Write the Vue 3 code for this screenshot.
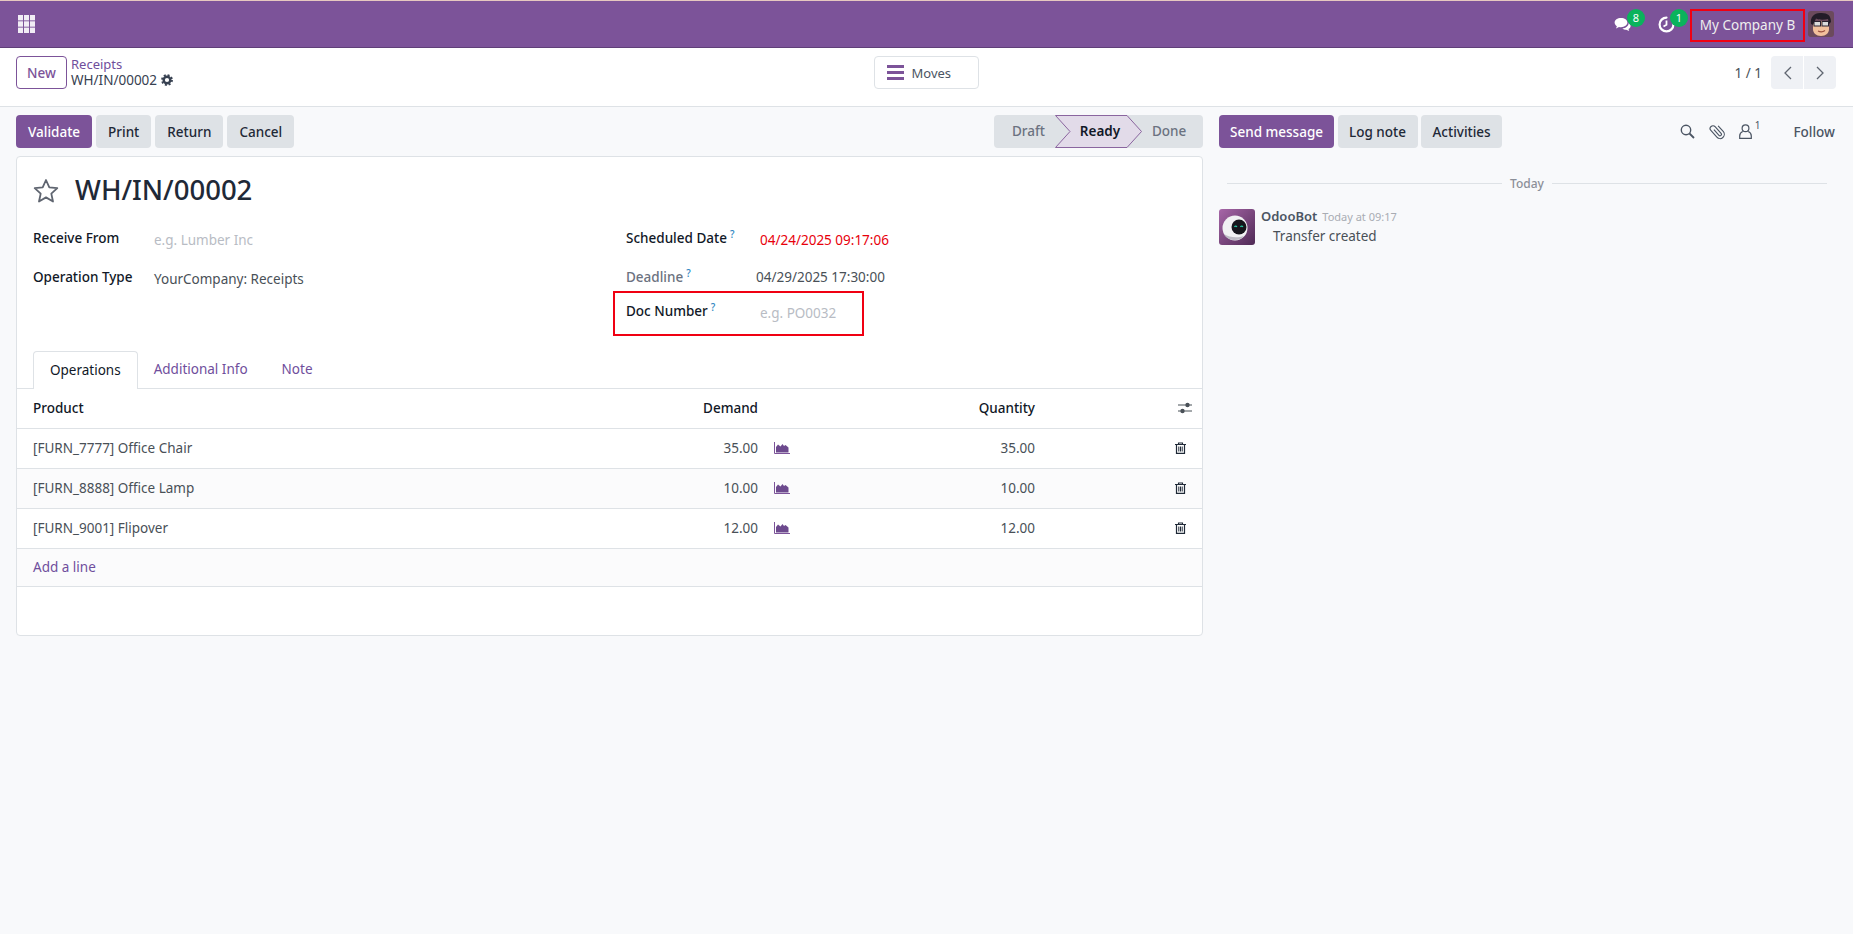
<script setup>
const lines = [
  { name: '[FURN_7777] Office Chair', demand: '35.00', qty: '35.00' },
  { name: '[FURN_8888] Office Lamp', demand: '10.00', qty: '10.00' },
  { name: '[FURN_9001] Flipover', demand: '12.00', qty: '12.00' },
]
</script>

<template>
  <div class="page">
    <header class="navbar">
      <svg class="apps" width="17" height="18" viewBox="0 0 17 18">
        <g fill="#f1edf5">
          <rect x="0" y="0" width="5" height="5.4" /><rect x="6" y="0" width="5" height="5.4" /><rect x="12" y="0" width="5" height="5.4" />
          <rect x="0" y="6.3" width="5" height="5.4" /><rect x="6" y="6.3" width="5" height="5.4" /><rect x="12" y="6.3" width="5" height="5.4" />
          <rect x="0" y="12.6" width="5" height="5.4" /><rect x="6" y="12.6" width="5" height="5.4" /><rect x="12" y="12.6" width="5" height="5.4" />
        </g>
      </svg>
      <div class="nav-right">
        <div class="nav-icon chat">
          <svg width="18" height="15" viewBox="0 0 18 15">
            <path fill="#fff" d="M7 1C3.4 1 .6 3 .6 5.6c0 1.500.9 2.800 2.300 3.600L2 11.400l3-1.400c.6.100 1.300.2 2 .2 3.600 0 6.400-2 6.400-4.600S10.600 1 7 1z" />
            <path fill="#fff" d="M14.600 6.200c0 2.900-2.800 5-6.300 5.200 1 .9 2.400 1.300 3.900 1.300l3 1.300-.7-2.100c1.300-.7 2.100-1.800 2.100-3 0-1.100-.7-2.100-2-2.700z" />
          </svg>
          <span class="badge">8</span>
        </div>
        <div class="nav-icon clock">
          <svg width="17" height="17" viewBox="0 0 17 17">
            <path fill="none" stroke="#fff" stroke-width="2.200" stroke-linecap="round" d="M8.500 1.600a6.900 6.900 0 1 0 6.900 6.900" />
            <path fill="none" stroke="#fff" stroke-width="1.800" d="M8.500 4.500v4.200l-3 1.800" />
          </svg>
          <span class="badge">1</span>
        </div>
        <div class="company">My Company B</div>
        <svg class="avatar-user" width="26" height="26" viewBox="0 0 26 26">
          <rect width="26" height="26" rx="3" fill="#6b4a5c" />
          <path fill="#f2c09c" d="M5 10h16v8c0 4-3 7-8 7s-8-3-8-7z" />
          <path fill="#231c28" d="M3 13C2 6 6 2 12 2c7-.5 11 2 11 9l-2 2-1-5c-4 1-9 1-12-.5L5 14z" />
          <g fill="#dcdcdc" stroke="#2a2230" stroke-width="1">
            <rect x="6" y="10.500" width="6.500" height="4.500" />
            <rect x="14" y="10.500" width="6.500" height="4.500" />
          </g>
          <path fill="none" stroke="#9a4f3e" stroke-width="1.200" d="M10 20c2 1 5 1 7-.5" />
        </svg>
      </div>
    </header>

    <div class="control-panel">
      <div class="cp-left">
        <button class="btn-new">New</button>
        <div class="crumbs">
          <a class="crumb-link">Receipts</a>
          <div class="crumb-current">
            WH/IN/00002
            <svg width="12" height="12" viewBox="0 0 12 12">
              <circle cx="6" cy="6" r="3.300" fill="none" stroke="#374151" stroke-width="2.400" />
              <circle cx="6" cy="6" r="5" fill="none" stroke="#374151" stroke-width="1.800" stroke-dasharray="2 1.930" />
            </svg>
          </div>
        </div>
      </div>
      <button class="btn-moves">
        <svg width="17" height="15" viewBox="0 0 17 15">
          <g fill="#7c5399"><rect width="17" height="3" /><rect y="6" width="17" height="3" /><rect y="12" width="17" height="3" /></g>
        </svg>
        Moves
      </button>
      <div class="pager">
        <span class="pager-text">1 / 1</span>
        <div class="pager-btns">
          <button class="pager-btn">
            <svg width="9" height="14" viewBox="0 0 9 14"><path d="M8 1 2 7l6 6" fill="none" stroke="#5f6570" stroke-width="1.300" /></svg>
          </button>
          <button class="pager-btn">
            <svg width="9" height="14" viewBox="0 0 9 14"><path d="m1 1 6 6-6 6" fill="none" stroke="#5f6570" stroke-width="1.300" /></svg>
          </button>
        </div>
      </div>
    </div>

    <div class="content">
      <main class="form-col">
        <div class="action-row">
          <div class="actions">
            <button class="btn primary">Validate</button>
            <button class="btn">Print</button>
            <button class="btn">Return</button>
            <button class="btn">Cancel</button>
          </div>
          <div class="statusbar">
            <span class="st st-draft">Draft</span>
            <span class="st st-ready">
              <svg class="st-shape" width="87" height="33" viewBox="0 0 87 33">
                <path d="M.5.5H72L86.500 16.500 72 32.500H.5L15 16.500z" fill="#e2dbe9" stroke="#8a659f" />
              </svg>
              <b>Ready</b>
            </span>
            <span class="st st-done">Done</span>
          </div>
        </div>

        <section class="sheet">
          <div class="title-row">
            <svg width="26" height="25" viewBox="0 0 26 25">
              <path d="M13 2l3.300 7.400 8 .8-6 5.400 1.700 7.900-7-4.100-7 4.100 1.700-7.900-6-5.400 8-.8z" fill="none" stroke="#5f6570" stroke-width="1.800" stroke-linejoin="round" />
            </svg>
            <h1>WH/IN/00002</h1>
          </div>

          <div class="fields">
            <div class="field-col">
              <div class="field row-a">
                <label class="lbl">Receive From</label>
                <span class="val placeholder">e.g. Lumber Inc</span>
              </div>
              <div class="field row-b">
                <label class="lbl">Operation Type</label>
                <span class="val">YourCompany: Receipts</span>
              </div>
            </div>
            <div class="field-col right">
              <div class="field row-a">
                <label class="lbl">Scheduled Date<sup>?</sup></label>
                <span class="val late">04/24/2025 09:17:06</span>
              </div>
              <div class="field row-b">
                <label class="lbl muted">Deadline<sup>?</sup></label>
                <span class="val deadline">04/29/2025 17:30:00</span>
              </div>
              <div class="field row-c">
                <label class="lbl">Doc Number<sup>?</sup></label>
                <span class="val placeholder">e.g. PO0032</span>
                <div class="redbox"></div>
              </div>
            </div>
          </div>

          <nav class="tabs">
            <a class="tab active">Operations</a>
            <a class="tab">Additional Info</a>
            <a class="tab">Note</a>
          </nav>

          <div class="table">
            <div class="tr head">
              <span>Product</span>
              <span class="num">Demand</span>
              <span></span>
              <span class="num">Quantity</span>
              <span class="act">
                <svg width="14" height="12" viewBox="0 0 14 12">
                  <g stroke="#495057" stroke-width="1"><path d="M0 3h14M0 9h14" /></g>
                  <circle cx="9.500" cy="3" r="2.200" fill="#495057" /><circle cx="4.500" cy="9" r="2.200" fill="#495057" />
                </svg>
              </span>
            </div>
            <div v-for="line in lines" :key="line.name" class="tr">
              <span>{{ line.name }}</span>
              <span class="num">{{ line.demand }}</span>
              <span class="chart">
                <svg width="16" height="12" viewBox="0 0 16 12">
                  <path d="M.5 0v11.500H16" fill="none" stroke="#7c5399" />
                  <path d="M2 10.500V5l2-2.500 2.500 2 2-2.500L10 4l1.500-1 3 2.500v5z" fill="#6d4a8e" />
                </svg>
              </span>
              <span class="num">{{ line.qty }}</span>
              <span class="act">
                <svg width="11" height="12" viewBox="0 0 11 12">
                  <path d="M0 2.500h11M3.500 2.500V1h4v1.500" fill="none" stroke="#1f2937" stroke-width="1.100" />
                  <path d="M1.500 2.500v8.800h8V2.500" fill="none" stroke="#1f2937" stroke-width="1.200" />
                  <path d="M3.800 4.500v5M5.500 4.500v5M7.200 4.500v5" stroke="#1f2937" stroke-width="1" />
                </svg>
              </span>
            </div>
            <div class="add-line"><a>Add a line</a></div>
          </div>
        </section>
      </main>

      <aside class="chatter">
        <div class="chatter-top">
          <div class="actions chatter-actions">
            <button class="btn primary">Send message</button>
            <button class="btn">Log note</button>
            <button class="btn">Activities</button>
          </div>
          <div class="chatter-tools">
            <svg width="15" height="15" viewBox="0 0 15 15">
              <circle cx="6" cy="6" r="4.700" fill="none" stroke="#4b5563" stroke-width="1.400" />
              <path d="M9.500 9.500 14 14" stroke="#4b5563" stroke-width="1.800" />
            </svg>
            <svg class="clip" width="17" height="17" viewBox="0 0 18 18">
              <path transform="rotate(-42 9 9)" d="M7.500 5v8a1.500 1.500 0 0 0 3 0V3.500a3 3 0 0 0-6 0V13a4.500 4.500 0 0 0 9 0V5" fill="none" stroke="#4b5563" stroke-width="1.200" />
            </svg>
            <span class="followers">
              <svg width="13" height="15" viewBox="0 0 13 15">
                <circle cx="6.500" cy="4.300" r="3.400" fill="none" stroke="#4b5563" stroke-width="1.200" />
                <path d="M3.800 7.500C1.800 8.200.7 9.700.7 12v2.300h11.600V12c0-2.300-1.100-3.800-3.100-4.500" fill="none" stroke="#4b5563" stroke-width="1.200" />
              </svg>
              <sup>1</sup>
            </span>
            <span class="follow">Follow</span>
          </div>
        </div>

        <div class="divider"><span>Today</span></div>

        <div class="message">
          <svg class="bot" width="36" height="36" viewBox="0 0 36 36">
            <defs>
              <linearGradient id="botbg" x1="0" y1="0" x2="1" y2="1">
                <stop offset="0" stop-color="#a766a8" />
                <stop offset="1" stop-color="#4f2a55" />
              </linearGradient>
            </defs>
            <rect width="36" height="36" rx="3" fill="url(#botbg)" />
            <circle cx="16" cy="19" r="12.500" fill="#f1f1f3" />
            <path d="M5 25c2 4 6 6 11 6 4 0 7-1.500 9-4-6 2-14 2-20-2z" fill="#bdbbc4" />
            <circle cx="20" cy="18" r="7.500" fill="#16161c" />
            <path d="M15.500 18c.6-1.300 1.800-1.300 2.400 0M21.500 18c.6-1.300 1.800-1.300 2.400 0" fill="none" stroke="#27c4a0" stroke-width="1.200" />
          </svg>
          <div class="msg-body">
            <div class="msg-head"><b>OdooBot</b><span>Today at 09:17</span></div>
            <div class="msg-text">Transfer created</div>
          </div>
        </div>
      </aside>
    </div>
  </div>
</template>

<style>
html, body { margin: 0; background: #f8f9fb; }
</style>

<style scoped>
.page {
  min-height: 934px;
  background: #f8f9fb;
  font-family: "Noto Sans", "Open Sans", sans-serif;
  font-size: 13.5px;
  color: #495057;
}
button { font-family: inherit; cursor: pointer; }
a { color: #6f4e9c; }

.navbar {
  height: 46px;
  border-top: 1px solid #e6c8c0;
  border-bottom: 1px solid #5f3f78;
  background: #7c5399;
  display: flex;
  align-items: center;
  justify-content: space-between;
  padding: 0 19px 0 18px;
}
.nav-right { display: flex; align-items: center; }
.nav-icon { position: relative; display: flex; }
.chat { margin-right: 26px; }
.clock { margin-right: 15px; }
.badge {
  position: absolute;
  top: -8px;
  right: -13px;
  width: 18px;
  height: 18px;
  border-radius: 50%;
  background: #0ab35c;
  color: #fff;
  font-size: 11px;
  line-height: 18px;
  text-align: center;
}
.clock .badge { top: -7px; }
.company {
  box-sizing: border-box;
  width: 115px;
  height: 33px;
  border: 2px solid #f00012;
  color: #eee;
  line-height: 29px;
  text-align: center;
  margin: 2px 3px 0 0;
}
.avatar-user { display: block; }

.control-panel {
  height: 50px;
  background: #fff;
  border-bottom: 1px solid #dee2e6;
  display: grid;
  grid-template-columns: 1fr auto 1fr;
  align-items: start;
  padding: 8px 17px 0 16px;
}
.cp-left { display: flex; align-items: center; gap: 4px; }
.btn-new {
  width: 51px;
  height: 33px;
  background: #fff;
  border: 1px solid #7c5399;
  border-radius: 4px;
  color: #7c5399;
  font-size: 13.5px;
  font-weight: 500;
  padding: 0;
}
.crumbs { line-height: 16px; margin-top: -1px; }
.crumb-link { display: block; font-size: 13px; }
.crumb-current { display: flex; align-items: center; gap: 4px; color: #374151; }
.btn-moves {
  width: 105px;
  height: 33px;
  background: #fff;
  border: 1px solid #dee2e6;
  border-radius: 4px;
  color: #4b5563;
  font-size: 13px;
  display: flex;
  align-items: center;
  gap: 8px;
  padding: 0 0 0 12px;
}
.pager { display: flex; justify-content: flex-end; align-items: center; gap: 9px; }
.pager-btns { display: flex; gap: 1px; }
.pager-btn {
  width: 32px;
  height: 33px;
  background: #eff1f5;
  border: 0;
  padding: 0;
  display: flex;
  align-items: center;
  justify-content: center;
}
.pager-btn:first-child { border-radius: 4px 0 0 4px; }
.pager-btn:last-child { border-radius: 0 4px 4px 0; }

.content { display: flex; align-items: flex-start; }
.form-col { width: 1203px; box-sizing: border-box; padding: 8px 0 0 16px; }
.action-row { display: flex; justify-content: space-between; height: 33px; }
.actions { display: flex; gap: 4px; }
.btn {
  height: 33px;
  padding: 0 12px;
  border: 0;
  border-radius: 4px;
  background: #dee2e6;
  color: #1f2937;
  font-size: 13.5px;
  font-weight: 500;
}
.btn.primary { background: #7c5399; color: #fff; }
.chatter-actions { gap: 3.5px; }
.chatter-actions .btn { padding: 0 11.5px; }
.chatter-actions .btn.primary { padding: 0 11px; }

.statusbar {
  width: 209px;
  height: 33px;
  display: flex;
  background: #dee2e6;
  border-radius: 4px;
  color: #6b7280;
  font-weight: 500;
  line-height: 33px;
}
.st-draft { width: 61px; box-sizing: border-box; padding-left: 18px; }
.st-ready {
  position: relative;
  width: 87px;
  color: #111827;
  text-align: center;
  padding-left: 3px;
  box-sizing: border-box;
}
.st-ready b { position: relative; font-weight: 600; }
.st-shape { position: absolute; left: 0; top: 0; }
.st-done { padding-left: 10px; }

.sheet {
  margin-top: 8px;
  height: 480px;
  box-sizing: border-box;
  background: #fff;
  border: 1px solid #dee2e6;
  border-radius: 4px;
  padding-top: 20px;
}
.title-row { display: flex; align-items: center; gap: 16px; padding-left: 16px; height: 26px; }
.title-row h1 { margin: 0; font-size: 27.500px; font-weight: 500; color: #1f2937; line-height: 26px; }

.fields { display: grid; grid-template-columns: 593px 1fr; margin-top: 23px; padding-left: 16px; height: 125px; align-content: start; }
.field { display: flex; position: relative; }
.row-a { height: 39px; padding-top: 2px; box-sizing: border-box; }
.row-b { height: 34px; padding-top: 2px; box-sizing: border-box; }
.row-c { height: 34px; padding-top: 2px; box-sizing: border-box; }
.lbl { width: 121px; color: #111827; font-weight: 500; line-height: 20px; flex: none; }
.lbl.muted { color: #6b7280; }
.lbl sup { color: #2e86c1; font-size: 10px; margin-left: 3px; line-height: 0; }
.val { line-height: 20px; margin-top: 2px; }
.right .lbl { width: 134px; }
.late { color: #e8000b; }
.deadline { margin: 0 0 0 -4px; }
.placeholder { color: #b8bcc4; }
.redbox {
  position: absolute;
  left: -13px;
  top: -8px;
  width: 251px;
  height: 45px;
  box-sizing: border-box;
  border: 2px solid #f00012;
}

.tabs { display: flex; padding-left: 16px; border-bottom: 1px solid #dee2e6; height: 37px; }
.tab { padding: 0 16px; line-height: 37px; height: 37px; }
.tab + .tab + .tab { margin-left: 2px; }
.tab.active {
  box-sizing: border-box;
  height: 38px;
  color: #111827;
  background: #fff;
  border: 1px solid #dee2e6;
  border-bottom: 0;
  border-radius: 4px 4px 0 0;
}

.tr {
  display: grid;
  grid-template-columns: 1fr 100px 60px 217px 167px;
  align-items: center;
  height: 40px;
  box-sizing: border-box;
  padding: 0 0 2px 16px;
  border-bottom: 1px solid #dee2e6;
}
.tr:nth-child(3) { background: #fbfbfc; }
.head { color: #111827; font-weight: 500; }
.num { text-align: right; }
.chart { padding-left: 16px; display: flex; }
.act { display: flex; justify-content: flex-end; padding-right: 16px; }
.head .act { padding-right: 10px; }
.add-line {
  height: 38px;
  box-sizing: border-box;
  padding-left: 16px;
  line-height: 36px;
  background: #fbfbfc;
  border-bottom: 1px solid #dee2e6;
}

.chatter { flex: 1; padding: 8px 18px 0 16px; box-sizing: border-box; }
.chatter-top { display: flex; justify-content: space-between; align-items: center; height: 33px; }
.chatter-tools { display: flex; align-items: center; color: #4b5563; }
.followers { display: flex; margin-left: 13px; }
.followers sup { font-size: 10px; line-height: 1; margin: -4px 0 0 3px; }
.clip { margin-left: 14px; }
.follow { margin-left: 33px; font-weight: 500; }

.divider {
  display: flex;
  align-items: center;
  gap: 8px;
  margin: 27px 8px 0;
  color: #8b8f98;
  font-size: 12px;
  font-weight: 500;
}
.divider::before, .divider::after { content: ""; flex: 1; height: 1px; background: #dee2e6; }
.message { display: flex; gap: 6px; margin-top: 17px; }
.bot { display: block; flex: none; }
.msg-head { display: flex; align-items: baseline; gap: 5px; line-height: 16px; margin-top: -1px; }
.msg-head b { font-size: 13px; font-weight: 600; color: #4b5563; }
.msg-head span { font-size: 11px; color: #a8acb3; }
.msg-text { padding-left: 12px; line-height: 20px; margin-top: 1px; }
</style>
